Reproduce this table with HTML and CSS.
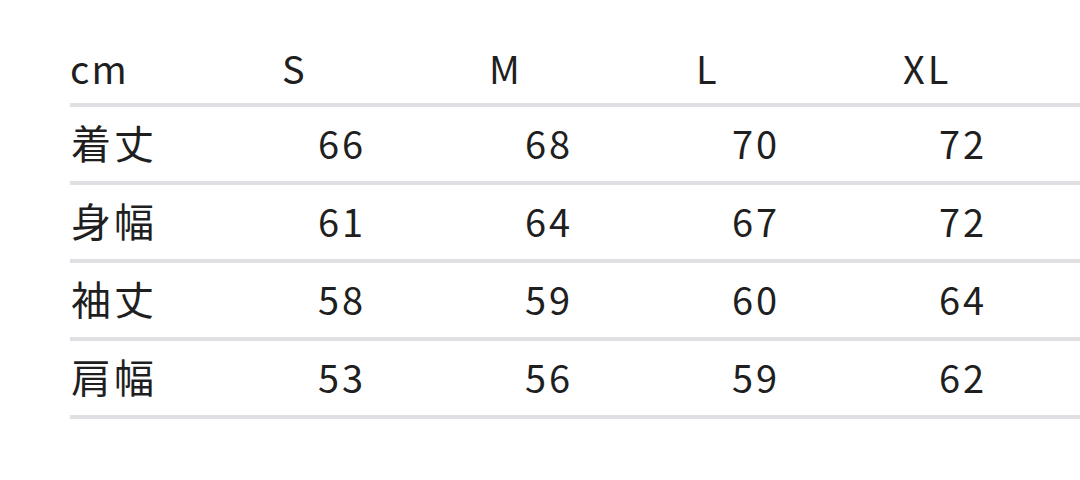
FILE: index.html
```html
<!DOCTYPE html>
<html lang="ja">
<head>
<meta charset="utf-8">
<link rel="stylesheet" href="styles.css">
</head>
<body>
<table class="size-table">
  <colgroup>
    <col class="c-label"><col class="c-size"><col class="c-size"><col class="c-size"><col class="c-last">
  </colgroup>
  <thead>
    <tr><th class="unit">cm</th><th>S</th><th>M</th><th>L</th><th>XL</th></tr>
  </thead>
  <tbody>
    <tr><td class="label">着丈</td><td>66</td><td>68</td><td>70</td><td>72</td></tr>
    <tr><td class="label">身幅</td><td>61</td><td>64</td><td>67</td><td>72</td></tr>
    <tr><td class="label">袖丈</td><td>58</td><td>59</td><td>60</td><td>64</td></tr>
    <tr><td class="label">肩幅</td><td>53</td><td>56</td><td>59</td><td>62</td></tr>
  </tbody>
</table>
</body>
</html>
```

FILE: styles.css
```css
html, body {
  margin: 0;
  padding: 0;
  background: #ffffff;
}
body {
  width: 1080px;
  height: 480px;
  overflow: hidden;
  font-family: "Noto Sans CJK JP", "Noto Sans", sans-serif;
  color: #1f1f1f;
}
.size-table {
  margin: 35px 0 0 70px;
  width: 1010px;
  table-layout: fixed;
  border-collapse: collapse;
  border-spacing: 0;
  font-size: 38px;
  letter-spacing: 3px;
}
.c-label { width: 212px; }
.c-size { width: 207px; }
.c-last { width: 177px; }
.size-table th,
.size-table td {
  padding: 0;
  text-align: left;
  font-weight: 400;
  white-space: nowrap;
  border-bottom: 4px solid #dfdfe4;
}
.size-table th {
  height: 66px;
  padding-bottom: 2px;
  line-height: 66px;
  vertical-align: middle;
}
.size-table th.unit {
  letter-spacing: 2px;
}
.size-table td {
  height: 71px;
  padding-bottom: 3px;
  line-height: 71px;
  vertical-align: middle;
  padding-left: 36px;
}
.size-table td.label {
  padding-left: 1px;
  font-size: 40px;
  letter-spacing: 3px;
}
```
